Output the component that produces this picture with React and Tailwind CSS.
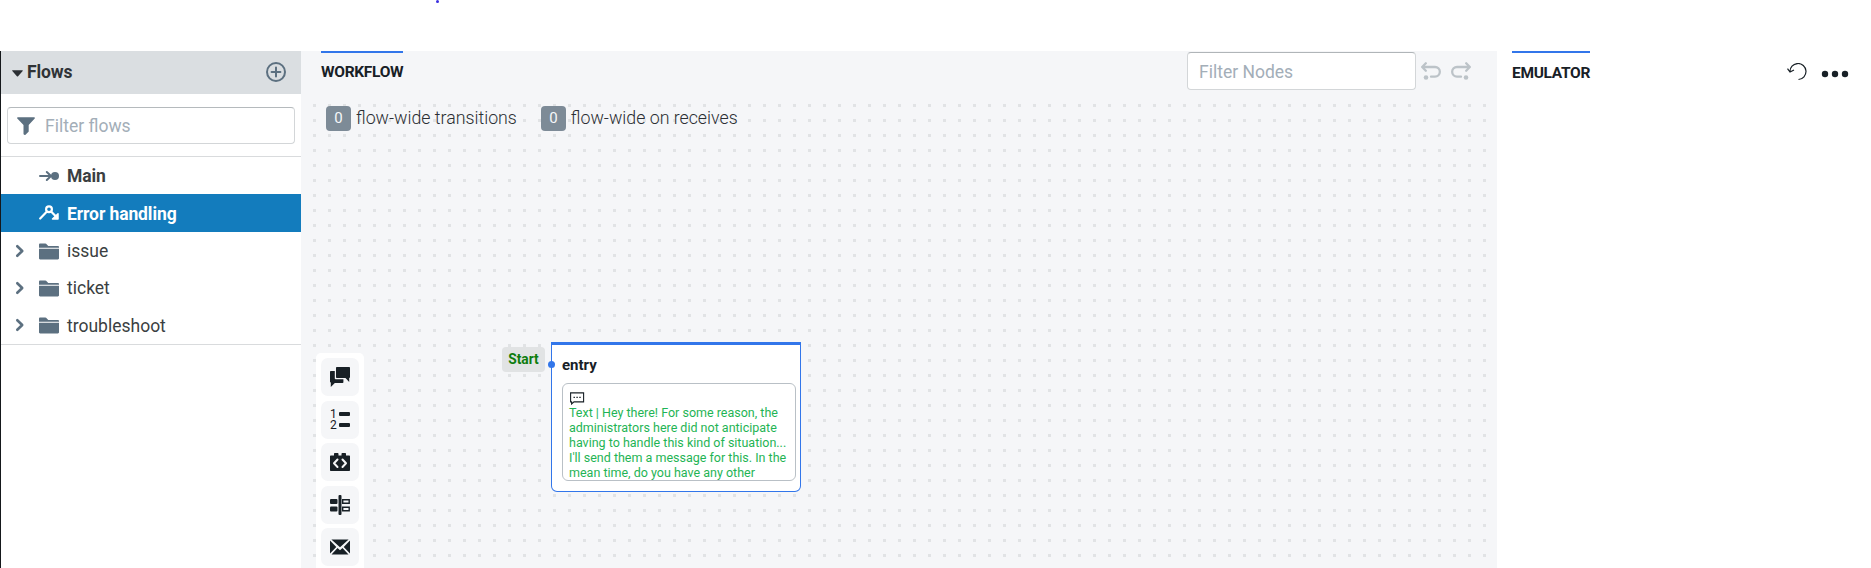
import React from "react";

function Svg({ className = "", children, size = 20, box = "0 0 20 20" }) {
  return (
    <svg width={size} height={size} viewBox={box} fill="currentColor" className={"block shrink-0 " + className}>
      {children}
    </svg>
  );
}

const Folder = () => (
  <Svg box="0 0 16 16">
    <path d="M0 13.8c0 .5.4.9.9.9h14.2c.5 0 .9-.4.9-.9V6.2H0v7.6zM15.2 3.9H7.4L5.7 2.2a1 1 0 00-.7-.3H.9c-.5 0-.9.4-.9.9v2.6h16v-.7c0-.4-.4-.8-.8-.8z" />
  </Svg>
);

const Chevron = () => (
  <svg width="10" height="14" viewBox="0 0 10 14" fill="none" stroke="currentColor" strokeWidth="2.6" strokeLinecap="round" strokeLinejoin="round" className="block shrink-0">
    <path d="M2.3 2.2L7.2 7l-4.9 4.8" />
  </svg>
);

function FolderRow({ name }) {
  return (
    <div className="flex h-[37.4px] items-center pl-[14px]">
      <div className="w-6 text-[#5c7080]"><Chevron /></div>
      <div className="w-7 text-[#5c7080]"><Folder /></div>
      <span className="pt-[2px] text-[17.5px] leading-none text-[#3b3f42]">{name}</span>
    </div>
  );
}

function Sidebar() {
  return (
    <aside className="flex w-[301px] shrink-0 flex-col border-l border-[#15181b] bg-white">
      <div className="flex h-[43px] items-center bg-[#dadee1] pl-[11px] pr-[15px]">
        <svg width="11" height="7" viewBox="0 0 11 7" className="mt-px block" fill="#2b2f33"><path d="M.6.3h9.8c.4 0 .5.4.3.7L6.1 6.2c-.4.4-.8.4-1.200 0L.3 1C0 .7.2.3.6.3z" /></svg>
        <span className="ml-1 grow pt-px text-[17.5px] font-bold leading-none tracking-[-0.1px] text-[#2f3336]">Flows</span>
        <svg width="20" height="20" viewBox="0 0 20 20" fill="none" stroke="#5c7080" strokeWidth="2" className="mb-px block">
          <circle cx="10" cy="10" r="9" />
          <path d="M10 5.6v8.800M5.6 10h8.800" strokeLinecap="round" />
        </svg>
      </div>
      <div className="pl-[6px] pr-[6px] pt-[13px]">
        <div className="flex h-[37px] items-center rounded-[4px] border border-[#d3d6d8] border-t-[#b5babd] pl-[9px] text-[#5c7080]">
          <svg width="18" height="18" viewBox="0 0 18 18" fill="currentColor" className="block"><path d="M.9.2h16.2c.8 0 1.1.9.6 1.4L11.7 8v6.2c0 .3-.1.6-.4.8l-2.8 2.7c-.8.6-2 .1-2-.9V8L.3 1.600C-.2 1.100.1.2.9.2z" /></svg>
          <span className="ml-[10px] pt-[2px] text-[17.5px] leading-none text-[#a3aeb8]">Filter flows</span>
        </div>
      </div>
      <div className="mt-3 border-y border-[#d9dbdd]">
        <div className="flex h-[37px] items-center pl-[38px] text-[#5c7080]">
          <svg width="20" height="12" viewBox="0 0 20 12" className="mt-px block" fill="none" stroke="currentColor" strokeWidth="2" strokeLinecap="round" strokeLinejoin="round">
            <path d="M1 6h10M7.800 2L12 6l-4.200 4" /><circle cx="16" cy="6" r="4" fill="currentColor" stroke="none" />
          </svg>
          <span className="ml-2 pt-[2px] text-[17.500px] font-bold leading-none tracking-[-0.1px] text-[#3b3f42]">Main</span>
        </div>
        <div className="flex h-[38px] items-center bg-[#137cbd] pl-[38px] text-white">
          <svg width="20" height="16" viewBox="0 0 20 16" className="block" fill="none" stroke="currentColor" strokeWidth="2.200" strokeLinecap="round">
            <path d="M1.200 13.500L7.200 7.300M12.800 7.200L17 11.500" /><circle cx="10" cy="4.200" r="2.900" /><path d="M19 8.700V14h-5.500z" fill="currentColor" strokeWidth="1.500" strokeLinejoin="round" />
          </svg>
          <span className="ml-2 pt-[3px] text-[17.500px] font-bold leading-none tracking-[-0.1px]">Error handling</span>
        </div>
        <FolderRow name="issue" />
        <FolderRow name="ticket" />
        <FolderRow name="troubleshoot" />
      </div>
    </aside>
  );
}

function Counter({ label }) {
  return (
    <div className="flex items-center">
      <span className="flex h-[25px] w-[25px] items-center justify-center rounded-[4px] bg-[#7d8b97] text-[15px] leading-none text-[#f5f8fa]">0</span>
      <span className="ml-[5px] text-[17.750px] font-light leading-none text-[#2b2f33]">{label}</span>
    </div>
  );
}

const tools = [
  <Svg key="chat">
    <path d="M6.800 0h12.400c.5 0 .8.300.8.800V10c0 .500-.3.900-.8.900V15l-3.700-4H6.800c-.5 0-.8-.3-.8-.8V.8c0-.5.300-.8.800-.8z" />
    <path d="M4.800 4H.8c-.5 0-.8.300-.8.800v10c0 .500.300.800.800.800V20l4-4h7.800c.5 0 .8-.300.800-.800v-3H5.600c-.5 0-.8-.300-.8-.800z" />
  </Svg>,
  <div key="list" className="flex items-center gap-[2px]">
    <div className="flex w-[7px] flex-col text-[12px] leading-[11px]"><span>1</span><span>2</span></div>
    <div className="flex flex-col gap-[7.500px]">
      <span className="h-[3.500px] w-[11px] rounded-[1px] bg-[#182026]" />
      <span className="h-[3.500px] w-[11px] rounded-[1px] bg-[#182026]" />
    </div>
  </div>,
  <Svg key="code">
    <path fillRule="evenodd" d="M1 3.500h3V2c0-.6.400-1 1-1h2.500c.6 0 1 .4 1 1v1.500h3V2c0-.6.400-1 1-1H15c.6 0 1 .4 1 1v1.500h3c.6 0 1 .4 1 1V18c0 .6-.4 1-1 1H1c-.6 0-1-.4-1-1V4.500c0-.6.400-1 1-1z" />
    <path d="M7.500 7.500L4 11.300l3.500 3.700M12.500 7.500l3.500 3.800-3.500 3.700" fill="none" stroke="#f5f6f8" strokeWidth="2" strokeLinecap="round" strokeLinejoin="round" />
  </Svg>,
  <Svg key="split">
    <rect x="8.500" y="0" width="3" height="20" rx="1" /><rect x="0" y="4" width="7.500" height="5" rx="1" /><rect x="0" y="11.500" width="7.500" height="5" rx="1" />
    <path d="M12.700 4.800h6.500v3.500h-6.500zM12.700 12.200h6.500v3.500h-6.500z" fill="none" stroke="currentColor" strokeWidth="1.400" />
  </Svg>,
  <Svg key="mail">
    <path d="M0 3.600v12.800l6.300-6.400zM20 3.600v12.800L13.700 10zM1.400 2.600L10 10.300l8.600-7.700zM12.500 11L10 13.200 7.500 11l-6 6.400h17z" />
  </Svg>,
];

function Workflow() {
  return (
    <main className="relative flex w-[1196px] shrink-0 flex-col overflow-hidden bg-[#f5f6f8]">
      <header className="flex h-[53px] items-start pl-5">
        <div className="border-t-2 border-[#3276ea] pt-[10px] text-[15.500px] font-bold leading-[18px] tracking-[-0.3px] text-[#182026]">WORKFLOW</div>
        <div className="grow" />
        <div className="mt-px flex h-[38px] w-[229px] items-center rounded-[4px] border border-[#d3d6d8] border-t-[#b0b5b8] bg-white pl-[11px] pt-[3px] text-[17.500px] leading-none text-[#a3aeb8]">Filter Nodes</div>
        <div className="ml-[5px] mr-[26px] mt-[11px] flex gap-[10px] text-[#bcc3c8]">
          <svg width="20" height="19" viewBox="0 0 20 19" className="block" fill="none" stroke="currentColor" strokeWidth="2.300" strokeLinecap="round" strokeLinejoin="round"><path d="M4.800 1.300L1.200 5l3.600 3.700M1.800 5H14a4.850 4.850 0 010 9.700h-4" /><circle cx="5" cy="15.500" r="2.300" fill="currentColor" stroke="none" /></svg>
          <svg width="20" height="19" viewBox="0 0 20 19" className="block" fill="none" stroke="currentColor" strokeWidth="2.300" strokeLinecap="round" strokeLinejoin="round"><path d="M15.200 1.300L18.800 5l-3.600 3.700M18.200 5H6a4.850 4.850 0 000 9.700h4" /><circle cx="15" cy="15.500" r="2.300" fill="currentColor" stroke="none" /></svg>
        </div>
      </header>
      <div className="relative grow bg-[linear-gradient(to_right,transparent_3px,#f5f6f8_3px),linear-gradient(to_bottom,#e1e3e5_3px,#f5f6f8_3px)] bg-[size:15px_15px] bg-[position:12px_0px]">
        <div className="flex gap-[24px] pl-[25px] pt-[2px]">
          <Counter label="flow-wide transitions" />
          <Counter label="flow-wide on receives" />
        </div>
        <div className="absolute left-[15px] top-[249px] flex h-[240px] w-12 flex-col items-center gap-[4.500px] rounded-[5px] bg-white pt-[5px] text-[#182026]">
          {tools.map((t, i) => (
            <div key={i} className="flex h-[38px] w-[38px] shrink-0 items-center justify-center rounded-[7px] bg-[#f5f6f8]">{t}</div>
          ))}
        </div>
        <div className="absolute left-[201px] top-[243px] flex h-[25px] w-[43px] items-center justify-center rounded-[4px] bg-[#e1e3e4] text-[13.750px] font-bold leading-none text-[#0e7d0e]">Start</div>
        <div className="absolute left-[250px] top-[238px] h-[150px] w-[250px] rounded-b-[6px] border border-t-[3px] border-[#3276ea] bg-white pl-[10px] pt-[11px]">
          <div className="text-[15px] font-bold leading-[18px] text-[#182026]">entry</div>
          <div className="mt-[9px] h-[98px] w-[234px] overflow-hidden rounded-[6px] border border-[#b9c0c6] bg-white pl-[6px] pt-2">
            <svg width="16" height="13" viewBox="0 0 16 13" className="block" fill="none" stroke="#182026" strokeWidth="1.100"><path d="M1.600.9h13v9H5L2.600 12V9.900h-1z" /><path d="M4.500 5.400h1.400M7.400 5.400h1.400M10.300 5.400h1.400" strokeWidth="1.400" /></svg>
            <div className="whitespace-nowrap text-[12.500px] leading-[15px] text-[#1fb455]">
              Text | Hey there! For some reason, the<br />administrators here did not anticipate<br />having to handle this kind of situation...<br />I'll send them a message for this. In the<br />mean time, do you have any other
            </div>
          </div>
        </div>
        <div className="absolute left-[247px] top-[257px] h-[7px] w-[7px] rounded-full bg-[#3276ea]" />
      </div>
    </main>
  );
}

function Emulator() {
  return (
    <section className="flex grow items-start bg-white pl-[15px]">
      <div className="border-t-2 border-[#3276ea] pt-[11px] text-[15.500px] font-bold leading-[18px] tracking-[-0.3px] text-[#182026]">EMULATOR</div>
      <div className="grow" />
      <svg width="20" height="18" viewBox="0 0 20 18" className="mt-3 block" fill="none" stroke="#182026" strokeWidth="1.200"><path d="M3 9A8 8 0 1111.500 16.500M.5 5.600L3 9l4-2" /></svg>
      <svg width="28" height="8" viewBox="0 0 28 8" className="ml-[14px] mr-[22px] mt-[19px] block" fill="#182026"><circle cx="4" cy="4" r="3.200" /><circle cx="14" cy="4" r="3.200" /><circle cx="24" cy="4" r="3.200" /></svg>
    </section>
  );
}

export default function App() {
  return (
    <div className="flex h-[568px] w-[1871px] flex-col overflow-hidden bg-white font-['Roboto',sans-serif]">
      <div className="h-[51px] shrink-0 pl-[436px]">
        <div className="h-[3px] w-[3px] rounded-full bg-[#3b2fe0]" />
      </div>
      <div className="flex min-h-0 grow">
        <Sidebar />
        <Workflow />
        <Emulator />
      </div>
    </div>
  );
}
